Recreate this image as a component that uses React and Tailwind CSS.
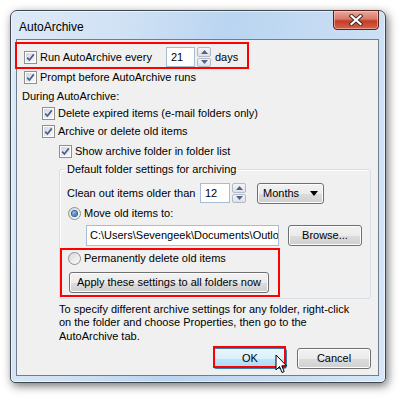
import React from "react";

const F = "[font-family:'Liberation_Sans',Arial,sans-serif] text-[11px] text-black whitespace-nowrap";

function Check() {
  return (
    <span className="w-[13px] h-[13px] shrink-0 border border-[#8e8f8f] bg-white p-[1px] flex">
      <span className="flex-1 bg-[linear-gradient(135deg,#d3d7dc,#f8f8f8)] flex items-center justify-center">
        <svg width="9" height="9" viewBox="0 0 9 9">
          <path d="M1.2 4.6 L3.4 7 L7.8 1.4" stroke="#4b5f96" strokeWidth="1.7" fill="none" />
        </svg>
      </span>
    </span>
  );
}

function Radio({ on }) {
  return (
    <span className="w-[13px] h-[13px] shrink-0 rounded-full border border-[#8e8f8f] bg-[linear-gradient(135deg,#d6d9dd,#fbfbfb)] flex items-center justify-center">
      {on && (
        <span className="w-[5px] h-[5px] rounded-full bg-[radial-gradient(circle_at_40%_35%,#8fc5ef,#1b4f8f)] shadow-[0_0_0_1px_#2d5f99]" />
      )}
    </span>
  );
}

function Spin() {
  return (
    <div className="flex flex-col w-[14px] h-[20px] ml-[2px] gap-[1px]">
      <div className="flex-1 rounded-[2px] border border-[#b3bac5] bg-[linear-gradient(to_bottom,#f4f5f7,#dde1e6)] flex items-center justify-center">
        <svg width="7" height="4" viewBox="0 0 7 4"><path d="M0 4 L3.5 0 L7 4 Z" fill="#4f6089" /></svg>
      </div>
      <div className="flex-1 rounded-[2px] border border-[#b3bac5] bg-[linear-gradient(to_bottom,#f4f5f7,#dde1e6)] flex items-center justify-center">
        <svg width="7" height="4" viewBox="0 0 7 4"><path d="M0 0 L7 0 L3.5 4 Z" fill="#4f6089" /></svg>
      </div>
    </div>
  );
}

const btn =
  "h-[21px] rounded-[3px] border border-[#707070] bg-[linear-gradient(to_bottom,#f2f2f2_0%,#ebebeb_50%,#dddddd_50%,#cfcfcf_100%)] shadow-[inset_0_0_0_1px_#fcfcfc] flex items-center justify-center";

export default function App() {
  return (
    <div className={`relative w-[404px] h-[401px] bg-white ${F}`}>
      <div className="absolute inset-0 p-[10px]">
        <div className="w-[376px] h-[373px] rounded-t-[7px] rounded-b-[5px] border border-[#3f474f] bg-[linear-gradient(100deg,#dde9f7_0%,#d1e2f5_25%,#bad5f1_50%,#c6dcf3_75%,#d7e7f8_100%)] shadow-[2px_3px_10px_rgba(0,0,0,0.55),inset_0_0_0_1px_rgba(255,255,255,0.55)] flex flex-col">
          <div className="h-[28px] flex items-start justify-between">
            <span className="pl-[8px] pt-[8px] text-[12px] leading-[16px]">AutoArchive</span>
            <div className="mr-[6px] -mt-[1px] w-[46px] h-[20px] rounded-b-[4px] border border-[#5a2218] bg-[linear-gradient(to_bottom,#e9a89b_0%,#d9786a_45%,#c43b26_55%,#d2644a_100%)] shadow-[inset_0_0_0_1px_rgba(255,220,210,0.5)] flex items-center justify-center">
              <svg width="14" height="12" viewBox="0 0 14 12">
                <path d="M2.5 2 L11.5 10 M11.5 2 L2.5 10" stroke="#3a2a28" strokeWidth="4" strokeLinecap="square" />
                <path d="M2.5 2 L11.5 10 M11.5 2 L2.5 10" stroke="#ffffff" strokeWidth="2.2" strokeLinecap="square" />
              </svg>
            </div>
          </div>
          <div className="ml-[5px] w-[363px] h-[337px] border border-[#6f7d8c] bg-[#f0f0f0] flex flex-col pt-[7px] pl-[7px]">
            <div className="h-[20px] flex items-center">
              <Check />
              <span className="ml-[3px] w-[126px]">Run AutoArchive every</span>
              <div className="w-[29px] h-[20px] border border-[#a9bcd5] bg-white flex items-center pl-[4px]">21</div>
              <Spin />
              <span className="ml-[4px]">days</span>
            </div>
            <div className="mt-[2px] h-[17px] flex items-center">
              <Check />
              <span className="ml-[3px]">Prompt before AutoArchive runs</span>
            </div>
            <div className="mt-[2px] h-[17px] flex items-center">
              <span className="-ml-[2px]">During AutoArchive:</span>
            </div>
            <div className="h-[17px] flex items-center pl-[18px]">
              <Check />
              <span className="ml-[3px]">Delete expired items (e-mail folders only)</span>
            </div>
            <div className="mt-[1px] h-[17px] flex items-center pl-[18px]">
              <Check />
              <span className="ml-[3px]">Archive or delete old items</span>
            </div>
            <div className="mt-[3px] h-[17px] flex items-center pl-[35px]">
              <Check />
              <span className="ml-[3px]">Show archive folder in folder list</span>
            </div>
            <fieldset className="mt-[1px] ml-[35px] w-[312px] rounded-[3px] border border-[#d5dfe5] pl-[7px] pb-[5px] shadow-[inset_1px_1px_0_#fff]">
              <legend className="-ml-[2px] px-[2px] h-[17px] leading-[17px]">Default folder settings for archiving</legend>
              <div className="mt-[5px] h-[20px] flex items-center">
                <span className="w-[133px]">Clean out items older than</span>
                <div className="w-[30px] h-[20px] border border-[#a9bcd5] bg-white flex items-center pl-[4px]">12</div>
                <Spin />
                <div className={`${btn} ml-[11px] w-[67px] !justify-between px-[5px]`}>
                  <span>Months</span>
                  <svg width="8" height="5" viewBox="0 0 8 5"><path d="M0 0 L8 0 L4 5 Z" fill="#000" /></svg>
                </div>
              </div>
              <div className="mt-[2px] h-[17px] flex items-center pl-[1px]">
                <Radio on />
                <span className="ml-[3px]">Move old items to:</span>
              </div>
              <div className="mt-[3px] h-[21px] flex items-center">
                <div className="ml-[19px] w-[193px] h-[21px] border border-[#a9bcd5] bg-white flex items-center pl-[3px] overflow-hidden">
                  C:\Users\Sevengeek\Documents\Outlo
                </div>
                <div className={`${btn} ml-[9px] w-[74px]`}>Browse...</div>
              </div>
              <div className="mt-[4px] h-[17px] flex items-center pl-[1px]">
                <Radio />
                <span className="ml-[3px]">Permanently delete old items</span>
              </div>
              <div className={`${btn} mt-[5px] ml-[2px] w-[200px]`}>Apply these settings to all folders now</div>
            </fieldset>
            <div className="mt-[4px] ml-[35px] leading-[13.3px]">
              <div>To specify different archive settings for any folder, right-click</div>
              <div>on the folder and choose Properties, then go to the</div>
              <div>AutoArchive tab.</div>
            </div>
            <div className="mt-[5px] flex justify-end pr-[7px]">
              <div className="h-[21px] w-[74px] rounded-[3px] border border-[#3c7fb1] bg-[linear-gradient(to_bottom,#eaf6fd_0%,#d9f0fc_50%,#bee6fd_50%,#a7d9f5_100%)] shadow-[inset_0_0_0_1px_rgba(255,255,255,0.7)] flex items-center justify-center">
                OK
              </div>
              <div className={`${btn} ml-[10px] w-[74px]`}>Cancel</div>
            </div>
          </div>
        </div>
      </div>

      <div className="absolute left-[15px] top-[42px] w-[234px] h-[27px] border-2 border-[#ff0000]" />
      <div className="absolute left-[60px] top-[248px] w-[220px] h-[49px] border-2 border-[#ff0000]" />
      <div className="absolute left-[213px] top-[346px] w-[73px] h-[22px] border-2 border-[#ff0000]" />

      <svg className="absolute left-[275px] top-[354px]" width="13" height="21" viewBox="0 0 13 21">
        <path d="M1 1 L1 16 L4.5 12.5 L7 18.5 L9.2 17.6 L6.8 11.8 L11.5 11.8 Z" fill="#fff" stroke="#000" strokeWidth="1" strokeLinejoin="round" />
      </svg>
    </div>
  );
}
